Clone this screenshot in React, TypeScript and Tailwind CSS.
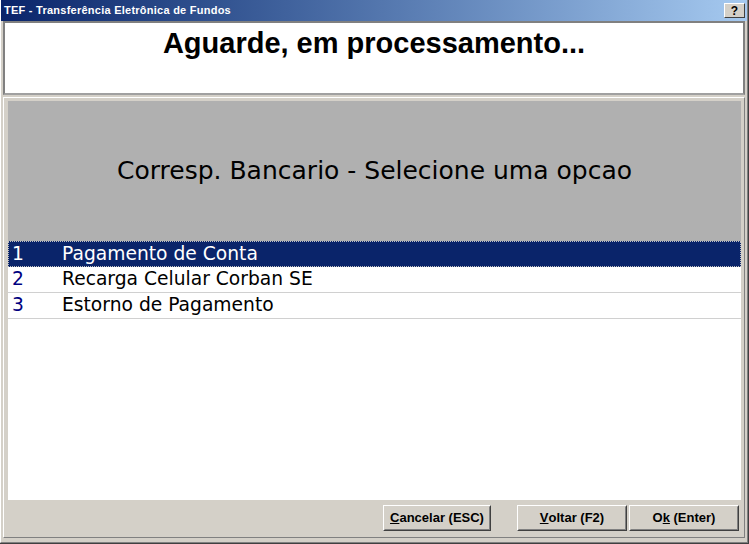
import React from "react";

const rows = [
  { n: "1", t: "Pagamento de Conta" },
  { n: "2", t: "Recarga Celular Corban SE" },
  { n: "3", t: "Estorno de Pagamento" },
];

function Btn({ pre, u, post, w }: { pre: string; u: string; post: string; w: string }) {
  return (
    <div className={`${w} h-[26px] border border-t-white border-l-white border-r-[#404040] border-b-[#404040] bg-[#d4d0c8]`}>
      <div className="w-full h-full border border-transparent border-r-[#808080] border-b-[#808080] flex items-center justify-center text-[13px] font-bold text-black" style={{ fontFamily: '"Liberation Sans", Arial, sans-serif' }}>
        <span>{pre}</span>
        <span className="underline">{u}</span>
        <span className="whitespace-pre">{post}</span>
      </div>
    </div>
  );
}

export default function App() {
  return (
    <div className="w-[749px] h-[544px] bg-[#d4d0c8] flex flex-col overflow-hidden border-r border-b border-r-[#404040] border-b-[#404040]">
      <div className="flex-1 flex flex-col border-l border-l-white border-r border-r-[#808080] border-b border-b-[#808080]">
        {/* title bar */}
        <div className="h-[21px] flex items-center justify-between pl-[3px] pr-[2px] bg-gradient-to-r from-[#0a246a] to-[#a6caf0]">
          <span className="text-white text-[11px] font-bold tracking-[0.25px]" style={{ fontFamily: '"Liberation Sans", Arial, sans-serif' }}>
            TEF - Transferência Eletrônica de Fundos
          </span>
          <div className="w-[21px] h-[15px] bg-[#d4d0c8] border border-t-white border-l-white border-r-[#404040] border-b-[#404040] flex items-center justify-center text-[12px] font-bold leading-none text-black" style={{ fontFamily: '"Liberation Sans", Arial, sans-serif' }}>
            ?
          </div>
        </div>
        <div className="flex-1 flex flex-col px-[2px] pb-[4px]">
          {/* top panel */}
          <div className="h-[74px] bg-white border-2 border-[#808080] border-b-[#a0a0a0] flex justify-center pt-[4px]">
            <span className="text-[29px] font-bold text-black leading-[32px]" style={{ fontFamily: '"Liberation Sans", Arial, sans-serif' }}>
              Aguarde, em processamento...
            </span>
          </div>
          {/* main panel */}
          <div className="flex-1 mt-[2px] flex flex-col border border-t-white border-l-white border-r-[#808080] border-b-[#808080] pt-[3px] pl-[4px] pr-[3px] pb-[1px]" style={{ fontFamily: '"DejaVu Sans", Verdana, sans-serif' }}>
            <div className="h-[140px] bg-[#b0b0b0] flex items-center justify-center">
              <span className="text-[25px] text-black">Corresp. Bancario - Selecione uma opcao</span>
            </div>
            <div className="flex-1 bg-white flex flex-col">
              {rows.map((r, i) => (
                <div
                  key={r.n}
                  className={
                    i === 0
                      ? "h-[26px] flex items-center bg-[#0a246a] text-white border border-dotted border-[#c0c0c0]"
                      : "h-[26px] flex items-center border-b border-b-[#d0d0d0] text-black"
                  }
                >
                  <span className={i === 0 ? "w-[53px] pl-[3px] text-[18.7px]" : "w-[54px] pl-[4px] text-[18.7px] text-[#000080]"}>{r.n}</span>
                  <span className="text-[18.7px]">{r.t}</span>
                </div>
              ))}
            </div>
            <div className="h-[36px] flex items-center justify-end gap-[2px] pr-[2px]">
              <Btn pre="" u="C" post="ancelar (ESC)" w="w-[108px] mr-[24px]" />
              <Btn pre="" u="V" post="oltar (F2)" w="w-[110px]" />
              <Btn pre="O" u="k" post=" (Enter)" w="w-[110px]" />
            </div>
          </div>
        </div>
      </div>
    </div>
  );
}
